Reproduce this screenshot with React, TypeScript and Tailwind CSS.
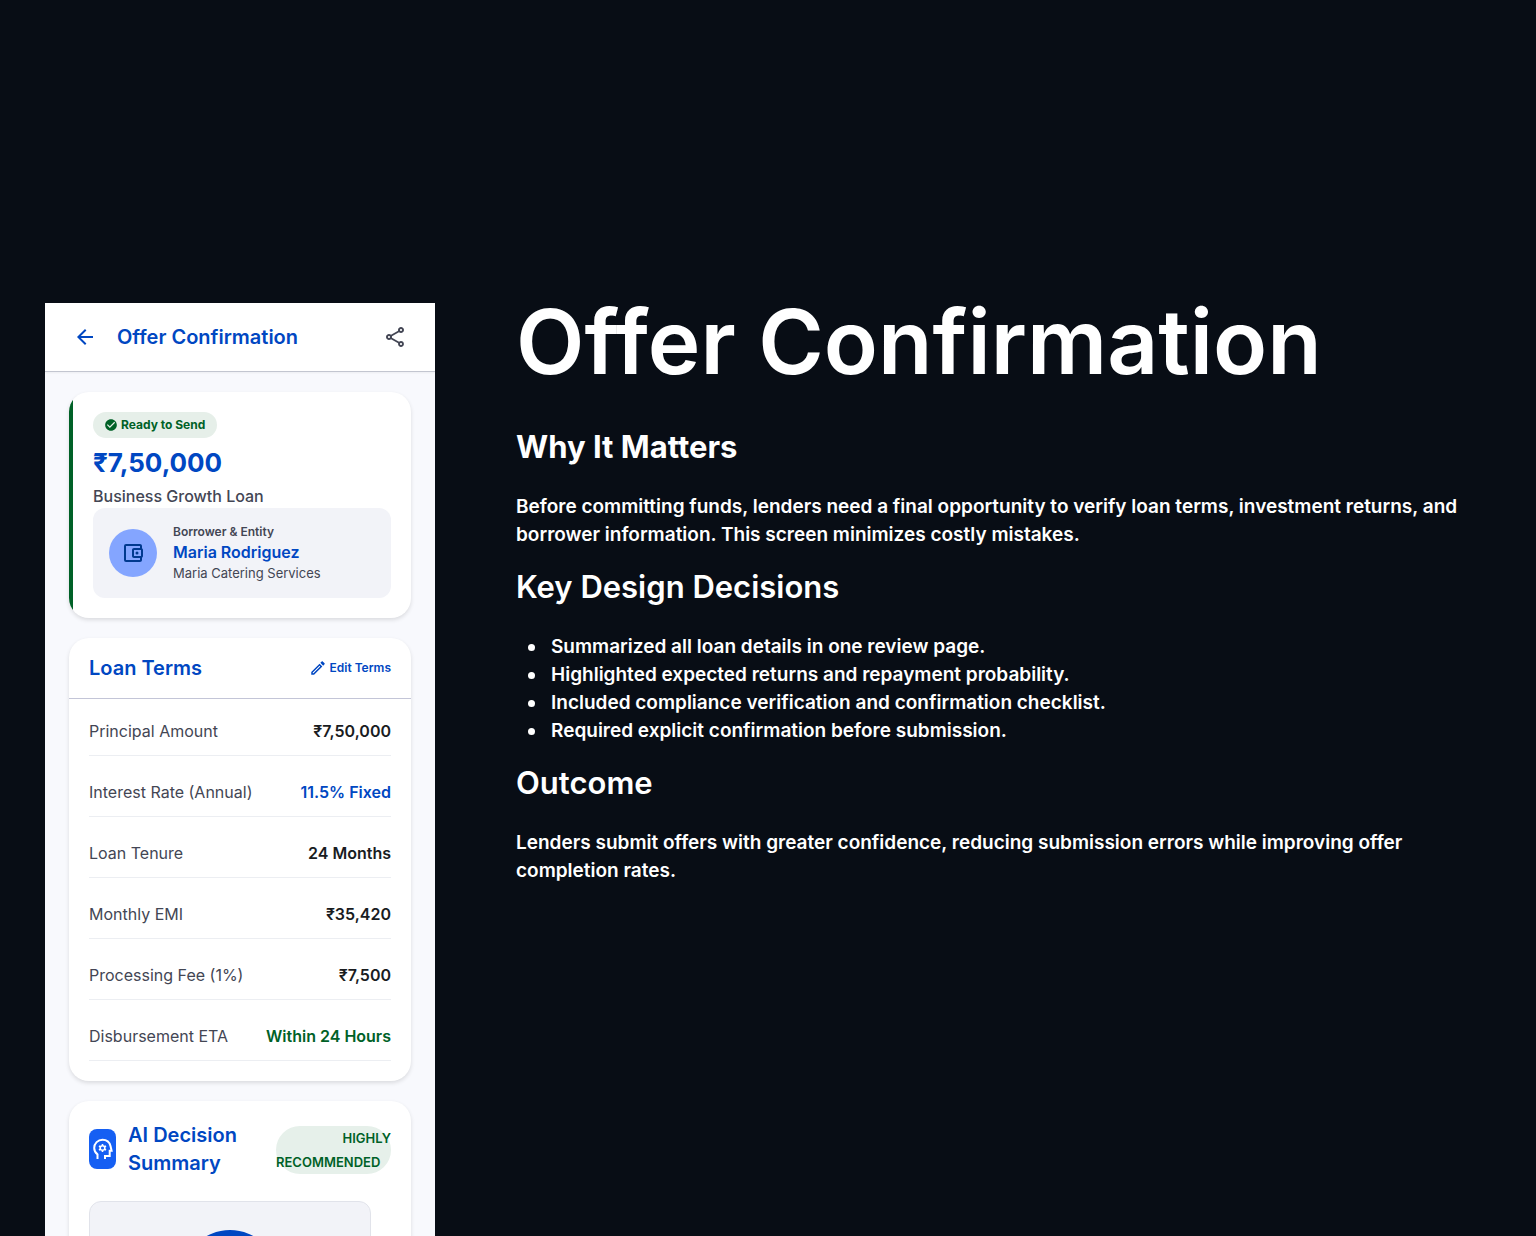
import type { ReactNode } from 'react'
import {
  MdArrowBack,
  MdCheckCircle,
  MdOutlineAccountBalanceWallet,
  MdOutlineEdit,
  MdOutlineShare,
} from 'react-icons/md'

interface Term {
  label: string
  value: string
  tone: string
}

const terms: Term[] = [
  { label: 'Principal Amount', value: '₹7,50,000', tone: 'text-[#191c1f]' },
  { label: 'Interest Rate (Annual)', value: '11.5% Fixed', tone: 'text-[#0047c2]' },
  { label: 'Loan Tenure', value: '24 Months', tone: 'text-[#191c1f]' },
  { label: 'Monthly EMI', value: '₹35,420', tone: 'text-[#191c1f]' },
  { label: 'Processing Fee (1%)', value: '₹7,500', tone: 'text-[#191c1f]' },
  { label: 'Disbursement ETA', value: 'Within 24 Hours', tone: 'text-[#006127]' },
]

const decisions = [
  'Summarized all loan details in one review page.',
  'Highlighted expected returns and repayment probability.',
  'Included compliance verification and confirmation checklist.',
  'Required explicit confirmation before submission.',
]

// head outline, open at the neck, with a gear inside
function MindIcon() {
  return (
    <svg viewBox="0 0 24 24" className="size-6 shrink-0" fill="none" stroke="currentColor" aria-hidden="true">
      <path
        strokeWidth="2"
        d="M6.5 22v-4.6C4.4 15.800 3.200 13.500 3.200 11a8.300 8.300 0 0 1 8.300-8.300c4 0 7.100 2.600 8 6.300l1.100 4.700h-1.900v5.200H14V22"
      />
      <circle cx="11.500" cy="11" r="2.300" strokeWidth="1.500" />
      <path
        strokeWidth="1.600"
        d="M11.500 8.300V7M11.500 15v-1.300M13.800 9.700l1.200-.7M8 13l1.200-.7M13.800 12.300l1.200.7M8 9l1.200.7"
      />
    </svg>
  )
}

function Card({ children }: { children: ReactNode }) {
  return (
    <section className="overflow-hidden rounded-[20px] bg-white shadow-[0_2px_4px_rgba(0,0,0,0.12)]">
      {children}
    </section>
  )
}

function OfferSummary() {
  return (
    <Card>
      <div className="border-l-4 border-[#006127] p-5">
        <div className="flex">
          <span className="flex h-[26px] items-center gap-[3px] rounded-full bg-[#e6efe9] pr-3 pl-[11px] text-xs font-bold text-[#006127]">
            <MdCheckCircle className="size-[14px]" />
            Ready to Send
          </span>
        </div>
        <p className="mt-2 text-[26px] leading-[34px] font-bold text-[#0047c2]">₹7,50,000</p>
        <p className="mt-1 text-base font-medium text-[#434654]">Business Growth Loan</p>
        <div className="flex items-center gap-4 rounded-xl bg-[#f2f3f8] p-4">
          <div className="flex size-12 items-center justify-center rounded-full bg-[#84a5ff] text-[#00398f]">
            <MdOutlineAccountBalanceWallet className="size-6" />
          </div>
          <div>
            <p className="text-xs font-semibold text-[#434654]">Borrower &amp; Entity</p>
            <p className="text-base font-semibold text-[#0047c2]">Maria Rodriguez</p>
            <p className="text-[13px] leading-[18px] text-[#434654]">Maria Catering Services</p>
          </div>
        </div>
      </div>
    </Card>
  )
}

function LoanTerms() {
  return (
    <Card>
      <div className="flex h-[61px] items-center justify-between border-b border-[#c3c5d7] px-5 text-[#0047c2]">
        <h3 className="text-xl font-semibold">Loan Terms</h3>
        <button type="button" className="flex items-center gap-0.5 text-xs font-semibold">
          <MdOutlineEdit className="size-[18px]" />
          Edit Terms
        </button>
      </div>
      <dl className="flex flex-col gap-6 p-5">
        {terms.map((term) => (
          <div key={term.label} className="flex justify-between border-b border-[#eceef2] pb-3 text-base">
            <dt className="text-[#434654]">{term.label}</dt>
            <dd className={`font-semibold ${term.tone}`}>{term.value}</dd>
          </div>
        ))}
      </dl>
    </Card>
  )
}

function DecisionSummary() {
  return (
    <Card>
      <div className="p-5">
        <div className="flex items-center">
          <div className="flex h-10 w-[27px] shrink-0 items-center justify-center rounded-lg bg-[#155ff3] text-white">
            <MindIcon />
          </div>
          <h3 className="ml-3 w-[120px] text-xl leading-7 font-semibold text-[#0047c2]">AI Decision Summary</h3>
          <div className="mt-0.5 ml-auto w-[115px] rounded-full bg-[#e6f0ea] text-right text-[13px] leading-6 font-semibold text-[#006127]">
            <span className="block">HIGHLY</span>
            <span className="block pr-3">RECOMMENDED</span>
          </div>
        </div>
        <div className="mt-6 mr-5 flex h-60 justify-center rounded-xl border border-[#e1e3ea] bg-[#f2f3f8] pt-7">
          <div className="size-24 rounded-full bg-[#0047c2]" />
        </div>
      </div>
    </Card>
  )
}

function PhoneScreen() {
  return (
    <div className="w-[390px] shrink-0 bg-[#f8f9fd]">
      <header className="flex h-[69px] items-center border-b border-[#c3c6d0] bg-white px-7 text-[#0047c2] shadow-xs">
        <button type="button" aria-label="Back">
          <MdArrowBack className="size-6" />
        </button>
        <h2 className="ml-5 flex-1 text-xl font-semibold">Offer Confirmation</h2>
        <button type="button" aria-label="Share" className="text-[#434654]">
          <MdOutlineShare className="size-6" />
        </button>
      </header>
      <div className="flex flex-col gap-5 px-6 py-5">
        <OfferSummary />
        <LoanTerms />
        <DecisionSummary />
      </div>
    </div>
  )
}

export default function App() {
  return (
    <main className="flex h-screen gap-[81px] overflow-hidden bg-[#080d15] pt-[303px] pr-14 pl-[45px] font-['Inter',sans-serif]">
      <PhoneScreen />
      <article className="min-w-0 flex-1 text-[19px] leading-7 font-semibold text-white">
        <h1 className="text-[89px] leading-[78px]">Offer Confirmation</h1>
        <h2 className="mt-11 mb-6 text-[31px] leading-[44px] font-bold">Why It Matters</h2>
        <p>
          Before committing funds, lenders need a final opportunity to verify loan terms, investment returns, and
          borrower information. This screen minimizes costly mistakes.
        </p>
        <h2 className="mt-4 mb-6 text-[31px] leading-[44px]">Key Design Decisions</h2>
        <ul className="pl-3">
          {decisions.map((decision) => (
            <li key={decision} className="flex items-center gap-4">
              <span className="size-[7px] shrink-0 rounded-full bg-white" />
              {decision}
            </li>
          ))}
        </ul>
        <h2 className="mt-4 mb-6 text-[31px] leading-[44px]">Outcome</h2>
        <p>
          Lenders submit offers with greater confidence, reducing submission errors while improving offer completion
          rates.
        </p>
      </article>
    </main>
  )
}
